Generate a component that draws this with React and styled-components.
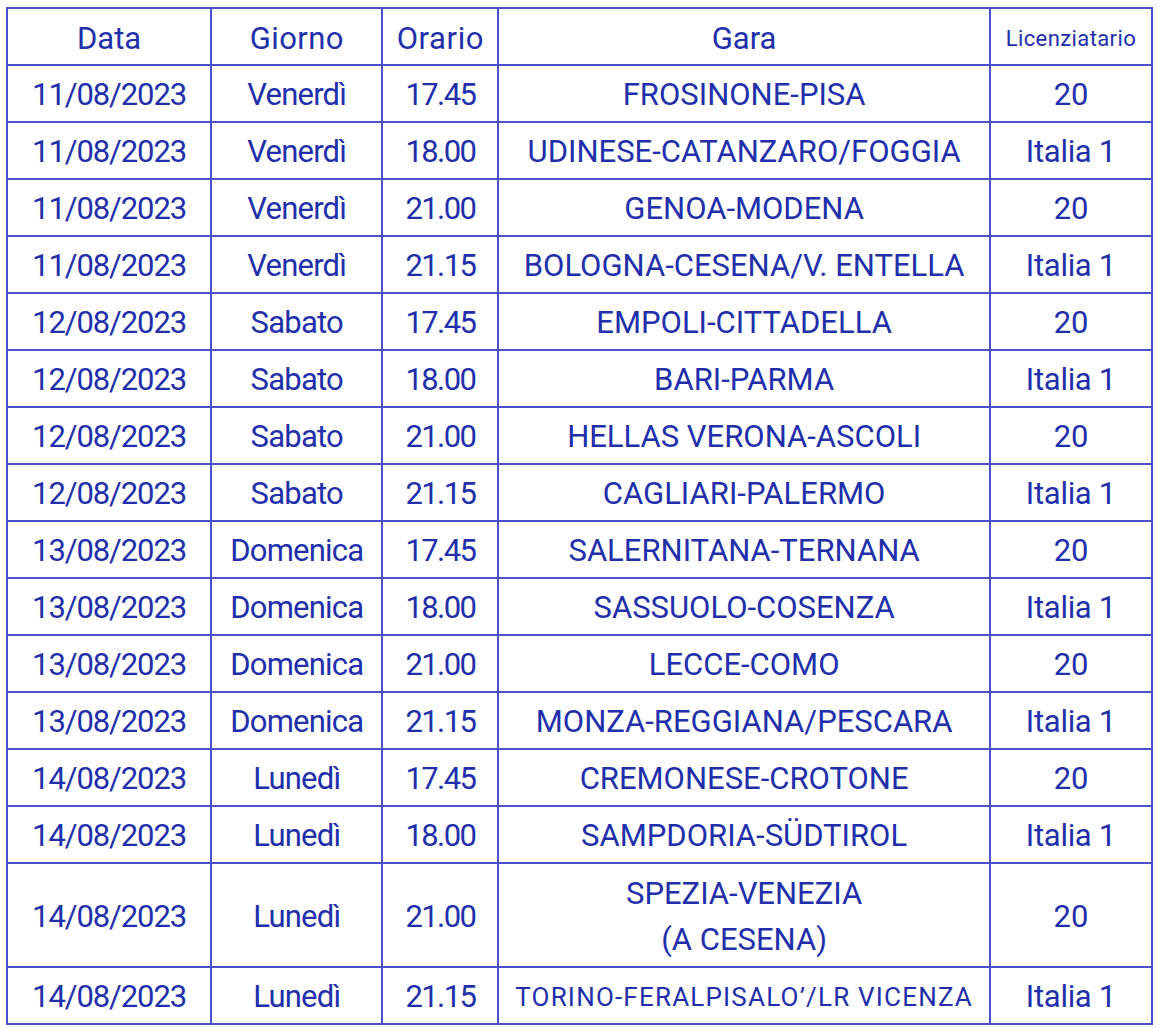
import React from 'react'
import styled, { createGlobalStyle } from 'styled-components'

const GlobalStyle = createGlobalStyle`
    body {
        margin: 0;
        background: #ffffff;
        font-family: Roboto, "Liberation Sans", sans-serif;
    }
`

const Page = styled.div`
    padding: 7px 0 0 6px;
`

const Table = styled.table`
    border-collapse: collapse;
    table-layout: fixed;
    width: 1147px;
    color: #2130aa;
    font-size: 31px;
`

const Th = styled.th`
    border: 2px solid #4a51cc;
    font-weight: 400;
    height: 52px;
    padding: 3px 0 0;
    text-align: center;
    ${props => props.ls && `letter-spacing: ${props.ls};`}
    ${props => props.small && `font-size: 22px; letter-spacing: 0.4px;`}
`

const Td = styled.td`
    border: 2px solid #4a51cc;
    height: 52px;
    padding: 3px 0 0;
    text-align: center;
    line-height: 46px;
    ${props => props.ls && `letter-spacing: ${props.ls};`}
    ${props => props.tall && `height: 99px;`}
    ${props => props.small && `font-size: 26px; letter-spacing: 1.2px;`}
`

// letter spacing per column, narrowing Roboto digits toward the original face
const spacing = ['-1.1px', '-0.8px', '-1.6px', '0', '-0.3px']

const rows = [
    ['11/08/2023', 'Venerdì', '17.45', 'FROSINONE-PISA', '20'],
    ['11/08/2023', 'Venerdì', '18.00', 'UDINESE-CATANZARO/FOGGIA', 'Italia 1'],
    ['11/08/2023', 'Venerdì', '21.00', 'GENOA-MODENA', '20'],
    ['11/08/2023', 'Venerdì', '21.15', 'BOLOGNA-CESENA/V. ENTELLA', 'Italia 1'],
    ['12/08/2023', 'Sabato', '17.45', 'EMPOLI-CITTADELLA', '20'],
    ['12/08/2023', 'Sabato', '18.00', 'BARI-PARMA', 'Italia 1'],
    ['12/08/2023', 'Sabato', '21.00', 'HELLAS VERONA-ASCOLI', '20'],
    ['12/08/2023', 'Sabato', '21.15', 'CAGLIARI-PALERMO', 'Italia 1'],
    ['13/08/2023', 'Domenica', '17.45', 'SALERNITANA-TERNANA', '20'],
    ['13/08/2023', 'Domenica', '18.00', 'SASSUOLO-COSENZA', 'Italia 1'],
    ['13/08/2023', 'Domenica', '21.00', 'LECCE-COMO', '20'],
    ['13/08/2023', 'Domenica', '21.15', 'MONZA-REGGIANA/PESCARA', 'Italia 1'],
    ['14/08/2023', 'Lunedì', '17.45', 'CREMONESE-CROTONE', '20'],
    ['14/08/2023', 'Lunedì', '18.00', 'SAMPDORIA-SÜDTIROL', 'Italia 1'],
]

export default function App() {
    return (
        <Page>
            <GlobalStyle />
            <Table>
                <colgroup>
                    <col style={{ width: 204 }} />
                    <col style={{ width: 171 }} />
                    <col style={{ width: 116 }} />
                    <col style={{ width: 491 }} />
                    <col style={{ width: 162 }} />
                </colgroup>
                <thead>
                    <tr>
                        <Th>Data</Th>
                        <Th ls="0.4px">Giorno</Th>
                        <Th ls="0.6px">Orario</Th>
                        <Th>Gara</Th>
                        <Th small>Licenziatario</Th>
                    </tr>
                </thead>
                <tbody>
                    {rows.map((r, i) => (
                        <tr key={i}>
                            {r.map((c, j) => <Td key={j} ls={spacing[j]}>{c}</Td>)}
                        </tr>
                    ))}
                    <tr>
                        <Td tall ls={spacing[0]}>14/08/2023</Td>
                        <Td tall ls={spacing[1]}>Lunedì</Td>
                        <Td tall ls={spacing[2]}>21.00</Td>
                        <Td tall>SPEZIA-VENEZIA<br />(A CESENA)</Td>
                        <Td tall>20</Td>
                    </tr>
                    <tr>
                        <Td ls={spacing[0]}>14/08/2023</Td>
                        <Td ls={spacing[1]}>Lunedì</Td>
                        <Td ls={spacing[2]}>21.15</Td>
                        <Td small>TORINO-FERALPISALO’/LR VICENZA</Td>
                        <Td ls={spacing[4]}>Italia 1</Td>
                    </tr>
                </tbody>
            </Table>
        </Page>
    )
}
